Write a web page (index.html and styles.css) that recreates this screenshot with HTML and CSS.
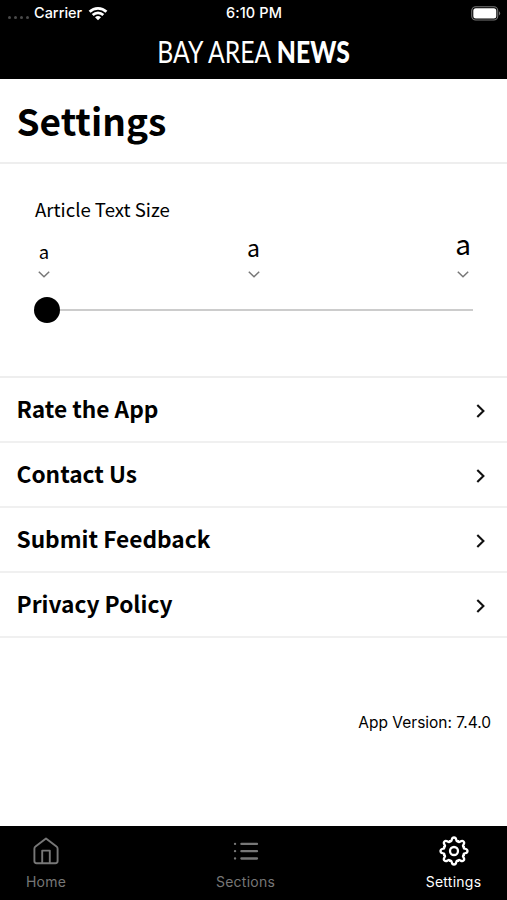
FILE: index.html
```html
<!DOCTYPE html>
<html lang="en">
<head>
<meta charset="utf-8">
<title>Settings</title>
<link rel="stylesheet" href="styles.css">
</head>
<body>
<header>
  <div class="status">
    <div class="carrier">
      <span class="dots"><i></i><i></i><i></i><i></i></span>
      <span>Carrier</span>
      <svg class="wifi" width="20" height="15" viewBox="0 0 20 15" fill="none" stroke="#fff" stroke-width="2.7">
        <path d="M1.6 5.8C6.3 1.1 13.7 1.1 18.4 5.8M4.7 9C7.7 6.1 12.3 6.1 15.3 9"/>
        <path d="M7 11.2Q10 8.9 13 11.2L10 14.3Z" fill="#fff" stroke="none"/>
      </svg>
    </div>
    <span class="time">6:10 PM</span>
    <svg class="battery" width="30" height="15" viewBox="0 0 30 15">
      <rect x=".75" y=".75" width="26" height="13.2" rx="4" fill="none" stroke="#777" stroke-width="1.1"/>
      <rect x="2.3" y="2.3" width="23" height="10.2" rx="2.5" fill="#fff"/>
      <path d="M28 5.2Q30.4 7.4 28 9.6Z" fill="#777"/>
    </svg>
  </div>
  <div class="logo">BAY AREA <b>NEWS</b></div>
</header>

<main>
  <h1>Settings</h1>

  <section class="text-size">
    <h2>Article Text Size</h2>
    <div class="sizes">
      <div class="small">a<svg width="12" height="7" viewBox="0 0 12 7"><path d="M.8 .8L6 5.8L11.2 .8"/></svg></div>
      <div class="medium">a<svg width="12" height="7" viewBox="0 0 12 7"><path d="M.8 .8L6 5.8L11.2 .8"/></svg></div>
      <div class="large">a<svg width="12" height="7" viewBox="0 0 12 7"><path d="M.8 .8L6 5.8L11.2 .8"/></svg></div>
    </div>
    <div class="slider"><div class="thumb"></div><div class="track"></div></div>
  </section>

  <ul class="links">
    <li><span>Rate the App</span><svg width="9" height="14" viewBox="0 0 9 14"><path d="M1.3 1L7.4 7L1.3 13"/></svg></li>
    <li><span>Contact Us</span><svg width="9" height="14" viewBox="0 0 9 14"><path d="M1.3 1L7.4 7L1.3 13"/></svg></li>
    <li><span>Submit Feedback</span><svg width="9" height="14" viewBox="0 0 9 14"><path d="M1.3 1L7.4 7L1.3 13"/></svg></li>
    <li><span>Privacy Policy</span><svg width="9" height="14" viewBox="0 0 9 14"><path d="M1.3 1L7.4 7L1.3 13"/></svg></li>
  </ul>

  <p class="version">App Version: 7.4.0</p>
</main>

<nav>
  <div class="tab home">
    <svg width="30" height="30" viewBox="0 0 30 30" fill="none" stroke="#777" stroke-width="1.9" stroke-linejoin="round">
      <path d="M15 2.5L25.5 10.6Q26.6 11.4 26.6 12.8V25Q26.6 27.2 24.4 27.2H5.6Q3.4 27.2 3.4 25V12.8Q3.4 11.4 4.5 10.6Z"/>
      <path d="M11.2 27V14.6H18.8V27"/>
    </svg>
    <span>Home</span>
  </div>
  <div class="tab sections">
    <svg width="30" height="30" viewBox="0 0 30 30" fill="none" stroke="#777" stroke-width="2.3" stroke-linecap="round">
      <path d="M10.4 7.9H26M10.4 15.2H26M10.4 22.5H26M4 7.9H4.1M4 15.2H4.1M4 22.5H4.1"/>
    </svg>
    <span>Sections</span>
  </div>
  <div class="tab active">
    <svg width="30" height="30" viewBox="-15 -15 30 30" fill="none" stroke="#fff" stroke-width="2.3" stroke-linecap="round">
      <defs><path id="tooth" d="M-4.06 -9.8C-1.2 -8.8 -3.4 -13.5 0 -13.5C3.4 -13.5 1.2 -8.8 4.06 -9.8"/></defs>
      <use href="#tooth"/>
      <use href="#tooth" transform="rotate(45)"/>
      <use href="#tooth" transform="rotate(90)"/>
      <use href="#tooth" transform="rotate(135)"/>
      <use href="#tooth" transform="rotate(180)"/>
      <use href="#tooth" transform="rotate(225)"/>
      <use href="#tooth" transform="rotate(270)"/>
      <use href="#tooth" transform="rotate(315)"/>
      <circle r="4"/>
    </svg>
    <span>Settings</span>
  </div>
</nav>
</body>
</html>
```
FILE: styles.css
```css
* { box-sizing: border-box; }
body {
  margin: 0;
  height: 900px;
  display: flex;
  flex-direction: column;
  background: #fff;
  color: #000;
  font-family: "Noto Sans CJK SC", "Noto Sans", sans-serif;
}
svg { display: block; flex: none; }

header {
  height: 79px;
  background: #000;
  color: #fff;
}
.status {
  height: 27px;
  display: grid;
  grid-template-columns: 1fr auto 1fr;
  align-items: center;
  padding: 0 6px 1px 8px;
  font: 500 14.5px/26px Inter, sans-serif;
}
.carrier { display: flex; align-items: center; }
.dots { display: flex; gap: 3px; margin: 8px 5px 0 0; }
.dots i { width: 3px; height: 3px; border-radius: 50%; background: #4a4a4a; }
.wifi { margin-left: 6px; }
.time { margin-right: 1px; letter-spacing: .1px; }
.battery { justify-self: end; }
.logo {
  height: 50px;
  text-align: center;
  white-space: nowrap;
  font: 400 30.5px/49px Lato, sans-serif;
  transform: scaleX(.812);
}
.logo b { font-weight: 900; }

main { flex: 1; }
h1 {
  margin: 0;
  height: 85px;
  padding-left: 16.5px;
  border-bottom: 2px solid #eee;
  font-size: 37px;
  line-height: 82px;
  font-weight: 700;
}
.text-size {
  height: 212px;
  padding: 31px 34px 0 34px;
}
h2 {
  margin: 0 0 0 1px;
  font-size: 18.6px;
  line-height: 28px;
  font-weight: 400;
}
.sizes {
  display: flex;
  justify-content: space-between;
  align-items: flex-end;
  height: 55px;
  padding: 0 4px;
}
.sizes div {
  display: flex;
  flex-direction: column;
  align-items: center;
  width: 12px;
  line-height: 30px;
}
.sizes svg { fill: none; stroke: #777; stroke-width: 1.5; }
.small { font-size: 18.5px; gap: 5px; }
.medium { font-size: 23px; gap: 9px; }
.large { font-size: 28px; gap: 13px; }
.slider { display: flex; align-items: center; margin-top: 19px; }
.thumb { width: 26px; height: 26px; border-radius: 50%; background: #000; }
.track { flex: 1; height: 2px; background: #ccc; }

.links {
  margin: 0;
  padding: 0;
  list-style: none;
  border-top: 2px solid #eee;
}
.links li {
  display: flex;
  justify-content: space-between;
  align-items: center;
  height: 65px;
  padding: 0 22px 0 16.5px;
  border-bottom: 2px solid #f0f0f0;
  font-size: 22.7px;
  font-weight: 700;
}
.links span { margin-bottom: 3px; }
.links svg { margin-top: 3px; fill: none; stroke: #111; stroke-width: 2.1; }
.version {
  margin: 74px 16px 0 0;
  text-align: right;
  font: 400 15.5px/22px Inter, sans-serif;
}

nav {
  display: flex;
  height: 74px;
  padding: 10px 13px 0 13px;
  background: #000;
  color: #777;
  font: 400 14px/20px Inter, sans-serif;
  letter-spacing: .25px;
}
.tab {
  display: flex;
  flex-direction: column;
  align-items: center;
  gap: 6px;
  width: 66px;
}
.sections { margin: 0 142px 0 133.5px; }
.active { color: #fff; }
```
